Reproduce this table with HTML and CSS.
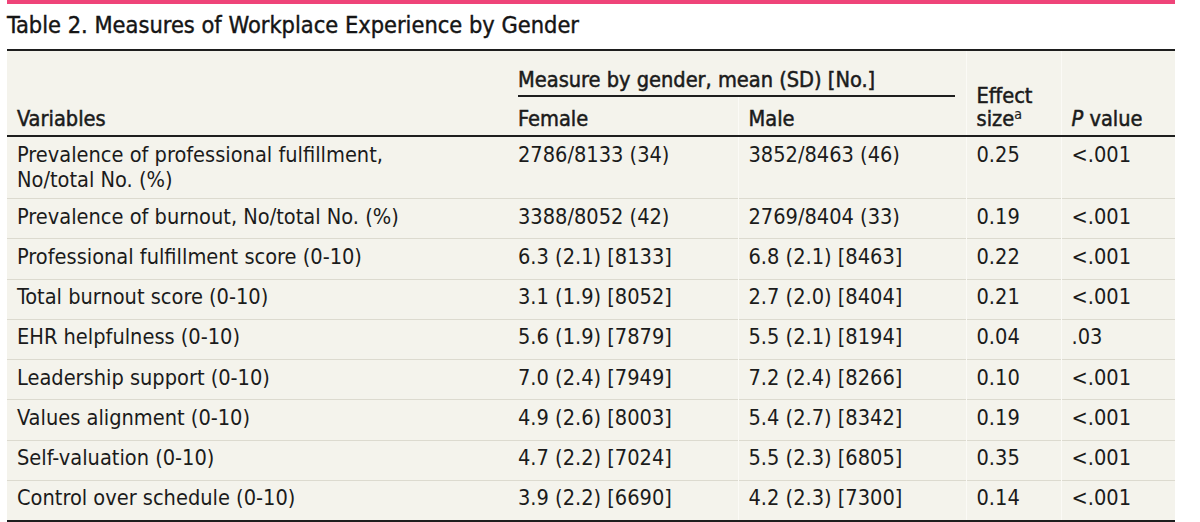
FILE: index.html
```html
<!DOCTYPE html>
<html lang="en">
<head>
<meta charset="utf-8">
<title>Table 2. Measures of Workplace Experience by Gender</title>
<link rel="stylesheet" href="styles.css">
</head>
<body>
<div class="figure">
  <div class="accent"></div>
  <h1 class="caption">Table 2. Measures of Workplace Experience by Gender</h1>
  <table class="data">
    <colgroup>
      <col class="c-var">
      <col class="c-f">
      <col class="c-m">
      <col class="c-es">
      <col class="c-p">
    </colgroup>
    <thead>
      <tr class="h1">
        <th rowspan="2" class="var">Variables</th>
        <th colspan="2" class="span"><span class="span-label">Measure by gender, mean (SD) [No.]</span></th>
        <th rowspan="2" class="es">Effect<br>size<sup>a</sup></th>
        <th rowspan="2" class="p"><i>P</i> value</th>
      </tr>
      <tr class="h2">
        <th class="f">Female</th>
        <th class="m">Male</th>
      </tr>
    </thead>
    <tbody>
      <tr class="first"><td class="var">Prevalence of professional fulfillment,<br>No/total No. (%)</td><td>2786/8133 (34)</td><td class="m">3852/8463 (46)</td><td class="es">0.25</td><td class="p">&lt;.001</td></tr>
      <tr><td class="var">Prevalence of burnout, No/total No. (%)</td><td>3388/8052 (42)</td><td class="m">2769/8404 (33)</td><td class="es">0.19</td><td class="p">&lt;.001</td></tr>
      <tr><td class="var">Professional fulfillment score (0-10)</td><td>6.3 (2.1) [8133]</td><td class="m">6.8 (2.1) [8463]</td><td class="es">0.22</td><td class="p">&lt;.001</td></tr>
      <tr><td class="var">Total burnout score (0-10)</td><td>3.1 (1.9) [8052]</td><td class="m">2.7 (2.0) [8404]</td><td class="es">0.21</td><td class="p">&lt;.001</td></tr>
      <tr><td class="var">EHR helpfulness (0-10)</td><td>5.6 (1.9) [7879]</td><td class="m">5.5 (2.1) [8194]</td><td class="es">0.04</td><td class="p">.03</td></tr>
      <tr><td class="var">Leadership support (0-10)</td><td>7.0 (2.4) [7949]</td><td class="m">7.2 (2.4) [8266]</td><td class="es">0.10</td><td class="p">&lt;.001</td></tr>
      <tr><td class="var">Values alignment (0-10)</td><td>4.9 (2.6) [8003]</td><td class="m">5.4 (2.7) [8342]</td><td class="es">0.19</td><td class="p">&lt;.001</td></tr>
      <tr><td class="var">Self-valuation (0-10)</td><td>4.7 (2.2) [7024]</td><td class="m">5.5 (2.3) [6805]</td><td class="es">0.35</td><td class="p">&lt;.001</td></tr>
      <tr><td class="var">Control over schedule (0-10)</td><td>3.9 (2.2) [6690]</td><td class="m">4.2 (2.3) [7300]</td><td class="es">0.14</td><td class="p">&lt;.001</td></tr>
    </tbody>
  </table>
</div>
</body>
</html>
```

FILE: styles.css
```css
html, body {
  margin: 0;
  padding: 0;
  background: #ffffff;
}

body {
  font-family: "DejaVu Sans Condensed", "Liberation Sans", sans-serif;
  color: #1b1b1b;
}

.figure {
  width: 1168px;
  margin-left: 7px;
}

.accent {
  height: 4px;
  background: #ef4479;
}

.caption {
  margin: 0;
  height: 45px;
  padding-top: 8px;
  box-sizing: border-box;
  font-size: 23.4px;
  line-height: 26px;
  font-weight: 400;
  -webkit-text-stroke: 0.4px #151515;
  color: #151515;
  white-space: nowrap;
}

.data {
  width: 1168px;
  border-collapse: collapse;
  table-layout: fixed;
  background: #f4f3ec;
  font-size: 21.6px;
  line-height: 25px;
  border-top: 2px solid #1e1e1e;
  border-bottom: 2px solid #1e1e1e;
}

.c-var { width: 501px; }
.c-f { width: 230px; }
.c-m { width: 228px; }
.c-es { width: 95px; }
.c-p { width: 114px; }

.data th {
  font-weight: 400;
  -webkit-text-stroke: 0.5px #1b1b1b;
  text-align: left;
  padding: 0 10px 4px 10px;
  vertical-align: bottom;
  white-space: nowrap;
}

.data thead tr.h2 th {
  padding-top: 9px;
}

.data thead {
  border-bottom: 2px solid #1e1e1e;
}

.data th.span {
  padding: 16px 10px 0 10px;
  vertical-align: top;
}

.span-label {
  display: block;
  border-bottom: 2px solid #1e1e1e;
  padding-bottom: 3px;
  margin-right: 1px;
}

.data th.es {
  line-height: 23px;
  padding-bottom: 5px;
}

.data i {
  font-style: italic;
}

.data td {
  padding: 4.5px 10px 9.75px 10px;
  vertical-align: top;
  white-space: nowrap;
}

.data tbody tr.first td {
  padding-top: 5px;
  padding-bottom: 6px;
}

.data tbody tr + tr {
  border-top: 1px solid #dcdacf;
}

.data .m,
.data .es,
.data .p {
  border-left: 1px solid #fbfaf6;
}

.data sup {
  font-size: 14px;
  line-height: 0;
  vertical-align: 7px;
  -webkit-text-stroke: 0.2px #1b1b1b;
}
```
